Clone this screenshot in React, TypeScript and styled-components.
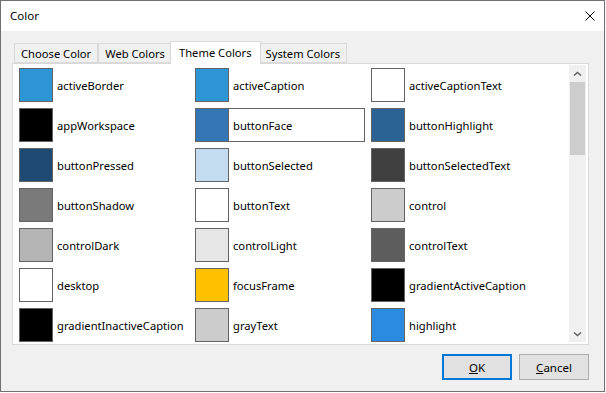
import React from 'react';
import styled, { createGlobalStyle } from 'styled-components';

const GlobalStyle = createGlobalStyle`
  html, body {
    margin: 0;
    padding: 0;
    background: #ffffff;
  }
  body {
    font-family: 'Noto Sans', 'Open Sans', sans-serif;
    font-size: 11.2px;
    color: #000;
  }
`;

const Window = styled.div`
  width: 605px;
  height: 392px;
  box-sizing: border-box;
  border: 1px solid #707070;
  display: flex;
  flex-direction: column;
  background: #f0f0f0;
`;

const TitleBar = styled.div`
  height: 30px;
  background: #ffffff;
  display: flex;
  align-items: center;
  justify-content: space-between;
  padding: 0 9px 0 9px;
`;

const Title = styled.span`
  font-size: 11.5px;
  line-height: 1;
`;

const CloseButton = styled.span`
  width: 10px;
  height: 10px;
  display: flex;
`;

const Body = styled.div`
  flex: 1;
  display: flex;
  flex-direction: column;
  padding: 10px 15px 11px 11px;
`;

const TabStrip = styled.div`
  display: flex;
  align-items: flex-end;
  height: 22px;
  padding-left: 2px;
  position: relative;
  z-index: 1;
`;

const Tab = styled.div<{ $active?: boolean }>`
  box-sizing: border-box;
  height: ${({ $active }) => ($active ? '23px' : '20px')};
  padding: ${({ $active }) => ($active ? '0 8px 1px' : '0 6px')};
  margin: ${({ $active }) => ($active ? '0 -2px -1px' : '0')};
  background: ${({ $active }) => ($active ? '#ffffff' : '#f0f0f0')};
  border: 1px solid #d9d9d9;
  border-bottom: ${({ $active }) => ($active ? 'none' : '1px solid #d9d9d9')};
  display: flex;
  align-items: center;
  white-space: nowrap;
  position: relative;
  z-index: ${({ $active }) => ($active ? 2 : 0)};
`;

const Panel = styled.div`
  height: 282px;
  box-sizing: border-box;
  border: 1px solid #d9d9d9;
  background: #ffffff;
  padding: 1px 1px 2px 1px;
  display: flex;
  overflow: hidden;
`;

const Grid = styled.div`
  flex: 1;
  display: grid;
  grid-template-columns: repeat(3, 170px);
  grid-auto-rows: 34px;
  column-gap: 6px;
  row-gap: 6px;
  padding: 3px 0 0 5px;
  overflow: hidden;
`;

const Item = styled.div<{ $selected?: boolean }>`
  display: flex;
  align-items: center;
  box-shadow: ${({ $selected }) => ($selected ? 'inset 0 0 0 1px #646464' : 'none')};
`;

const Swatch = styled.div<{ $color: string }>`
  width: 34px;
  height: 34px;
  box-sizing: border-box;
  border: 1px solid #646464;
  background: ${({ $color }) => $color};
  flex-shrink: 0;
`;

const Label = styled.span`
  margin-left: 4px;
  white-space: nowrap;
`;

const ScrollBar = styled.div`
  width: 17px;
  background: #f0f0f0;
  display: flex;
  flex-direction: column;
  margin-right: 1px;
`;

const ArrowButton = styled.div`
  height: 17px;
  display: flex;
  align-items: center;
  justify-content: center;
`;

const Track = styled.div`
  flex: 1;
  padding: 0 1px;
`;

const Thumb = styled.div`
  height: 73px;
  background: #cdcdcd;
`;

const ButtonRow = styled.div`
  display: flex;
  justify-content: flex-end;
  gap: 7px;
  margin-top: 9px;
`;

const Button = styled.button<{ $default?: boolean }>`
  width: 70px;
  height: 26px;
  box-sizing: border-box;
  background: #e1e1e1;
  border: ${({ $default }) => ($default ? '2px solid #0078d7' : '1px solid #adadad')};
  font-family: inherit;
  font-size: 11.5px;
  color: #000;
  padding: 0;
  display: flex;
  align-items: center;
  justify-content: center;
`;

type TColor = { name: string; color: string; selected?: boolean };

const colors: TColor[] = [
  { name: 'activeBorder', color: '#2d95d3' },
  { name: 'activeCaption', color: '#2d95d3' },
  { name: 'activeCaptionText', color: '#ffffff' },
  { name: 'appWorkspace', color: '#000000' },
  { name: 'buttonFace', color: '#3476b4', selected: true },
  { name: 'buttonHighlight', color: '#2a6394' },
  { name: 'buttonPressed', color: '#1f4b73' },
  { name: 'buttonSelected', color: '#c3dcf0' },
  { name: 'buttonSelectedText', color: '#404040' },
  { name: 'buttonShadow', color: '#7a7a7a' },
  { name: 'buttonText', color: '#ffffff' },
  { name: 'control', color: '#cccccc' },
  { name: 'controlDark', color: '#b4b4b4' },
  { name: 'controlLight', color: '#e6e6e6' },
  { name: 'controlText', color: '#5d5d5d' },
  { name: 'desktop', color: '#ffffff' },
  { name: 'focusFrame', color: '#ffc000' },
  { name: 'gradientActiveCaption', color: '#000000' },
  { name: 'gradientInactiveCaption', color: '#000000' },
  { name: 'grayText', color: '#cccccc' },
  { name: 'highlight', color: '#2b8be0' }
];

const tabs = ['Choose Color', 'Web Colors', 'Theme Colors', 'System Colors'];

const Chevron: React.FC<{ down?: boolean }> = ({ down }) => (
  <svg width="9" height="6" viewBox="0 0 9 6">
    <path
      d={down ? 'M1 1.5 L4.5 4.5 L8 1.5' : 'M1 4.5 L4.5 1.5 L8 4.5'}
      fill="none"
      stroke="#606060"
      strokeWidth="1.5"
    />
  </svg>
);

const App: React.FC = () => {
  return (
    <>
      <GlobalStyle />
      <Window>
        <TitleBar>
          <Title>Color</Title>
          <CloseButton>
            <svg width="10" height="10" viewBox="0 0 10 10">
              <path d="M0.5 0.5 L9.5 9.5 M9.5 0.5 L0.5 9.5" stroke="#000" strokeWidth="1" />
            </svg>
          </CloseButton>
        </TitleBar>
        <Body>
          <TabStrip>
            {tabs.map((t) => (
              <Tab key={t} $active={t === 'Theme Colors'}>
                {t}
              </Tab>
            ))}
          </TabStrip>
          <Panel>
            <Grid>
              {colors.map((c) => (
                <Item key={c.name} $selected={c.selected}>
                  <Swatch $color={c.color} />
                  <Label>{c.name}</Label>
                </Item>
              ))}
            </Grid>
            <ScrollBar>
              <ArrowButton>
                <Chevron />
              </ArrowButton>
              <Track>
                <Thumb />
              </Track>
              <ArrowButton>
                <Chevron down />
              </ArrowButton>
            </ScrollBar>
          </Panel>
          <ButtonRow>
            <Button $default>
              <u>O</u>K
            </Button>
            <Button>
              <u>C</u>ancel
            </Button>
          </ButtonRow>
        </Body>
      </Window>
    </>
  );
};

export default App;
